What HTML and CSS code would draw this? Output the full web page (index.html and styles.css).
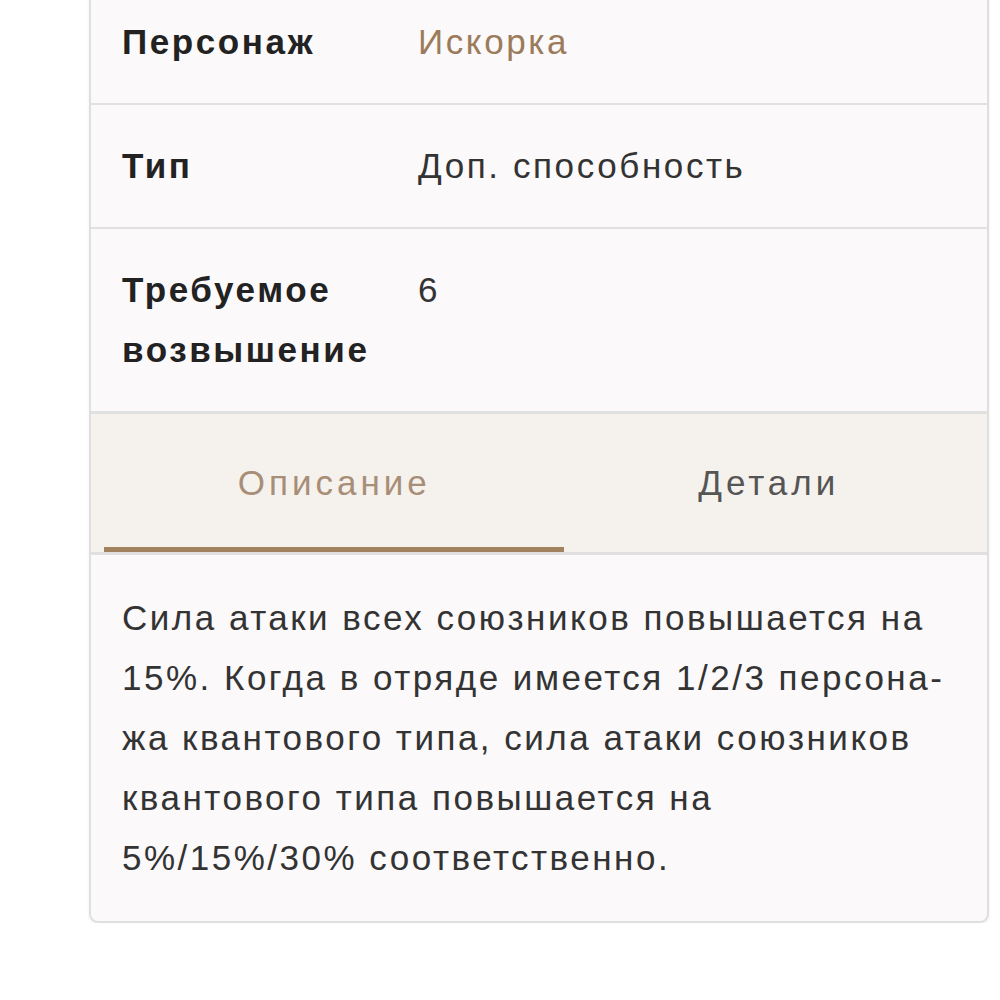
FILE: index.html
```html
<!DOCTYPE html>
<html lang="ru">
  <head>
    <meta charset="UTF-8" />
    <title>Искорка — Доп. способность</title>
    <link rel="stylesheet" href="styles.css">
  </head>
  <body>
    <div class="card">
      <div class="info-row">
        <div class="info-label">Персонаж</div>
        <div class="info-value"><a class="char-link" href="#">Искорка</a></div>
      </div>
      <div class="info-row">
        <div class="info-label">Тип</div>
        <div class="info-value">Доп. способность</div>
      </div>
      <div class="info-row">
        <div class="info-label">Требуемое возвышение</div>
        <div class="info-value">6</div>
      </div>

      <div class="tabs">
        <button type="button" class="tab active">Описание</button>
        <button type="button" class="tab">Детали</button>
      </div>
      <div class="tab-content">
        Сила атаки всех союзников повышается на 15%. Когда в отряде имеется 1/2/3 персона&shy;жа квантового типа, сила атаки союзников квантового типа повышается на 5%/15%/30% соответственно.
      </div>
    </div>
  </body>
</html>
```

FILE: styles.css
```css
body {
  margin: 0;
  background: #fff;
  font-family: "Liberation Sans", Arial, sans-serif;
}
.card {
  width: 896px;
  margin: -21px 0 0 89px;
  background-color: #fbf9fa;
  border: 2px solid #e0dfe0;
  border-radius: 0 0 9px 9px;
  box-shadow: 0 2px 3px rgba(0, 0, 0, 0.06);
  overflow: hidden;
}
.info-row {
  display: grid;
  grid-template-columns: 296px 1fr;
  padding: 31px 31px;
  border-bottom: 2px solid #e2e1e2;
  font-size: 35px;
  line-height: 60px;
  letter-spacing: 2.6px;
}
.info-row:nth-child(3) {
  border-bottom-width: 3px;
}
.info-label {
  font-weight: bold;
  color: #222;
}
.info-value {
  color: #333;
}
.char-link {
  color: #9c7b5b;
  text-decoration: none;
}
.tabs {
  display: flex;
  padding: 0 14px 0 13px;
  background-color: #f5f2ee;
  border-bottom: 3px solid #e1dfdf;
}
.tab {
  flex: 1 1 auto;
  height: 138px;
  padding: 4px 0 0;
  border: none;
  border-bottom: 5px solid transparent;
  background: none;
  font-family: "Liberation Sans", Arial, sans-serif;
  font-size: 35px;
  letter-spacing: 4px;
  color: #555;
  cursor: pointer;
}
.tab.active {
  color: #a88e76;
  border-bottom-color: #a0825f;
}
.tab-content {
  padding: 33px 31px 33px;
  font-size: 35px;
  line-height: 60px;
  letter-spacing: 2.5px;
  color: #333;
  hyphens: manual;
}
```
